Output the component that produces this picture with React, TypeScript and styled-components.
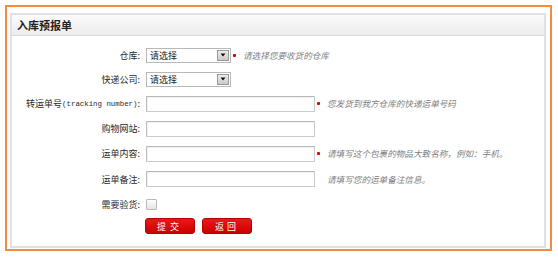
import React from "react";
import styled, { createGlobalStyle } from "styled-components";

const GlobalStyle = createGlobalStyle`
  html, body { margin: 0; padding: 0; background: #fff; }
  body { font-family: "Noto Sans CJK SC", "Noto Sans", sans-serif; color: #333; }
  * { box-sizing: border-box; }
`;

const Frame = styled.div`
  margin: 5px 0 0 5px;
  width: 547px;
  height: 246px;
  border: 2px solid #f58a3d;
  padding: 6px 4px 1px 3px;
`;

const Panel = styled.div`
  height: 100%;
  border: 2px solid #e1e1e1;
  display: flex;
  flex-direction: column;
`;

const Header = styled.div`
  height: 21px;
  border-bottom: 1px solid #d9d9d9;
  background: linear-gradient(#fbfbfb, #ececec);
  display: flex;
  align-items: center;
  padding-left: 5px;
`;

const Title = styled.h2`
  margin: 0;
  font-size: 11px;
  font-weight: 700;
  color: #222;
  line-height: 1;
`;

const Form = styled.div`
  padding-top: 7px;
  display: flex;
  flex-direction: column;
`;

const Row = styled.div<{ $h: number }>`
  display: flex;
  align-items: center;
  height: ${(p) => p.$h}px;
`;

const Label = styled.label`
  width: 128px;
  text-align: right;
  font-size: 9px;
  line-height: 1;
  color: #2a2a2a;
  white-space: nowrap;
`;

const Latin = styled.span`
  font-family: "Liberation Mono", monospace;
  font-size: 7.4px;
  vertical-align: 1px;
`;

const Control = styled.div`
  margin-left: 6px;
  display: flex;
  align-items: center;
`;

const SelectBox = styled.div`
  width: 85px;
  height: 15px;
  border: 1px solid #b9b9b9;
  background: #fff;
  display: flex;
  align-items: center;
  justify-content: space-between;
  padding: 0 1px 0 3px;
  font-size: 9px;
  color: #222;
`;

const SelectButton = styled.span`
  width: 12px;
  height: 11px;
  border: 1px solid #9a9a9a;
  background: linear-gradient(#eeeeee, #c9c9c9);
  display: flex;
  align-items: center;
  justify-content: center;
`;

const TextInput = styled.input`
  width: 169px;
  height: 16px;
  border: 1px solid #cbcbcb;
  border-top-color: #b8b8b8;
  border-left-color: #bdbdbd;
  border-radius: 1px;
  background: #fff;
  box-shadow: inset 1px 1px 1px rgba(0, 0, 0, 0.06);
  padding: 0 3px;
  font-size: 9px;
  outline: none;
`;

const StarSlot = styled.span`
  width: 12px;
  padding-left: 2px;
  display: flex;
  align-items: center;
`;

const Star = styled.span`
  width: 3px;
  height: 3px;
  background: #e00000;
  border-radius: 1px;
`;

const Hint = styled.span`
  font-size: 8.6px;
  font-style: italic;
  color: #808080;
  white-space: nowrap;
  line-height: 1;
`;

const Check = styled.span`
  width: 11px;
  height: 11px;
  border: 1px solid #b9b9b9;
  border-radius: 1px;
  background: linear-gradient(#fdfdfd, #e4e4e4);
`;

const ButtonRow = styled.div`
  margin-top: 2px;
  margin-left: 133px;
  display: flex;
  gap: 7px;
`;

const RedButton = styled.button<{ $sp?: number }>`
  width: 50px;
  height: 16px;
  border: 1px solid #b80000;
  border-radius: 3px;
  background: linear-gradient(#ec1818, #cc0000);
  color: #fff;
  font-family: "Noto Sans CJK SC", sans-serif;
  font-size: 9px;
  letter-spacing: ${(p) => p.$sp ?? 1}px;
  line-height: 1;
  padding: 0;
  display: flex;
  align-items: center;
  justify-content: center;
`;

const Arrow = () => (
  <svg width="6" height="4" viewBox="0 0 6 4">
    <path d="M0.5 0.5 L5.5 0.5 L3 3.5 Z" fill="#111" />
  </svg>
);

const Select = () => (
  <SelectBox>
    <span>请选择</span>
    <SelectButton>
      <Arrow />
    </SelectButton>
  </SelectBox>
);

export default function App() {
  return (
    <>
      <GlobalStyle />
      <Frame>
        <Panel>
          <Header>
            <Title>入库预报单</Title>
          </Header>
          <Form>
            <Row $h={24}>
              <Label>仓库:</Label>
              <Control>
                <Select />
                <StarSlot>
                  <Star />
                </StarSlot>
                <Hint>请选择您要收货的仓库</Hint>
              </Control>
            </Row>
            <Row $h={24}>
              <Label>快递公司:</Label>
              <Control>
                <Select />
              </Control>
            </Row>
            <Row $h={25}>
              <Label>
                转运单号<Latin>(tracking number)</Latin>:
              </Label>
              <Control>
                <TextInput />
                <StarSlot>
                  <Star />
                </StarSlot>
                <Hint>您发货到我方仓库的快递运单号码</Hint>
              </Control>
            </Row>
            <Row $h={25}>
              <Label>购物网站:</Label>
              <Control>
                <TextInput />
              </Control>
            </Row>
            <Row $h={25}>
              <Label>运单内容:</Label>
              <Control>
                <TextInput />
                <StarSlot>
                  <Star />
                </StarSlot>
                <Hint>请填写这个包裹的物品大致名称，例如：手机。</Hint>
              </Control>
            </Row>
            <Row $h={26}>
              <Label>运单备注:</Label>
              <Control>
                <TextInput />
                <StarSlot />
                <Hint>请填写您的运单备注信息。</Hint>
              </Control>
            </Row>
            <Row $h={24}>
              <Label>需要验货:</Label>
              <Control>
                <Check />
              </Control>
            </Row>
            <ButtonRow>
              <RedButton $sp={4}>提交</RedButton>
              <RedButton $sp={3}>返回</RedButton>
            </ButtonRow>
          </Form>
        </Panel>
      </Frame>
    </>
  );
}
